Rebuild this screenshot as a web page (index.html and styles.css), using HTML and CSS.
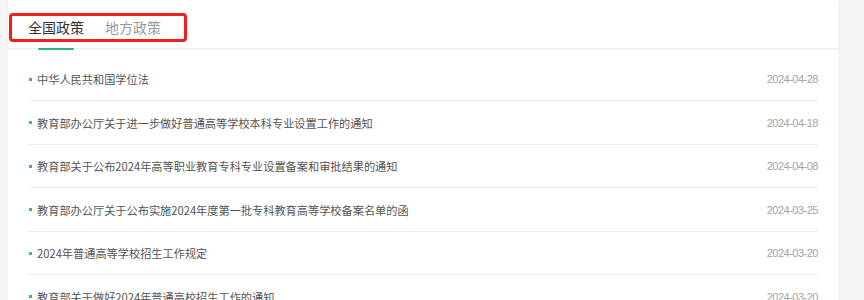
FILE: index.html
```html
<!DOCTYPE html>
<html lang="zh-CN">
<head>
<meta charset="UTF-8">
<meta name="viewport" content="width=device-width, initial-scale=1.0">
<title>政策</title>
<link rel="stylesheet" href="styles.css">
</head>
<body>

<div class="page">
    <div class="card">
        <div class="tabs">
            <span class="tab active">全国政策</span>
            <span class="tab">地方政策</span>
        </div>
        <div class="mark"></div>

        <ul class="news">
            <li><span class="title">中华人民共和国学位法</span><span class="date">2024-04-28</span></li>
            <li><span class="title">教育部办公厅关于进一步做好普通高等学校本科专业设置工作的通知</span><span class="date">2024-04-18</span></li>
            <li><span class="title">教育部关于公布2024年高等职业教育专科专业设置备案和审批结果的通知</span><span class="date">2024-04-08</span></li>
            <li><span class="title">教育部办公厅关于公布实施2024年度第一批专科教育高等学校备案名单的函</span><span class="date">2024-03-25</span></li>
            <li><span class="title">2024年普通高等学校招生工作规定</span><span class="date">2024-03-20</span></li>
            <li><span class="title">教育部关于做好2024年普通高校招生工作的通知</span><span class="date">2024-03-20</span></li>
        </ul>
    </div>
</div>

</body>
</html>
```

FILE: styles.css
```css
body {
    margin: 0;
    padding: 0;
    background-color: #f4f4f4;
    font-family: "Noto Sans CJK SC", "Liberation Sans", sans-serif;
    overflow: hidden;
}

.page {
    padding-left: 8px;
    height: 300px;
}

.card {
    position: relative;
    width: 830px;
    height: 300px;
    background-color: #fff;
}

.tabs {
    display: flex;
    gap: 21px;
    height: 48px;
    padding: 0 20px;
    border-bottom: 1px solid #eee;
    box-shadow: 0 1px 2px rgba(0, 0, 0, 0.04);
}

.tab {
    position: relative;
    font-size: 14px;
    line-height: 20px;
    padding-top: 17px;
    color: #999;
}

.tab.active {
    color: #333;
}

.tab.active::after {
    content: "";
    position: absolute;
    left: 10px;
    right: 10px;
    bottom: -2px;
    height: 2px;
    border-radius: 1px;
    background-color: #30b383;
}

/* red annotation box drawn over the tabs */
.mark {
    position: absolute;
    left: 1px;
    top: 13px;
    width: 172px;
    height: 23px;
    border: 3px solid #f01e1e;
    border-radius: 4px;
}

.news {
    list-style: none;
    margin: 0;
    padding: 8.5px 20px 0 20px;
}

.news li {
    display: flex;
    justify-content: space-between;
    align-items: center;
    padding: 11.5px 0 11px 0;
    line-height: 20px;
    border-bottom: 1px solid #eee;
    font-size: 11.2px;
}

.title {
    display: flex;
    align-items: center;
    color: #555;
}

.title::before {
    content: "";
    width: 3px;
    height: 3px;
    margin: 0 5px 0 1px;
    background-color: #45b08f;
}

.date {
    font-family: "Liberation Sans", sans-serif;
    font-size: 11px;
    letter-spacing: -0.5px;
    color: #a3a3a3;
}
```
